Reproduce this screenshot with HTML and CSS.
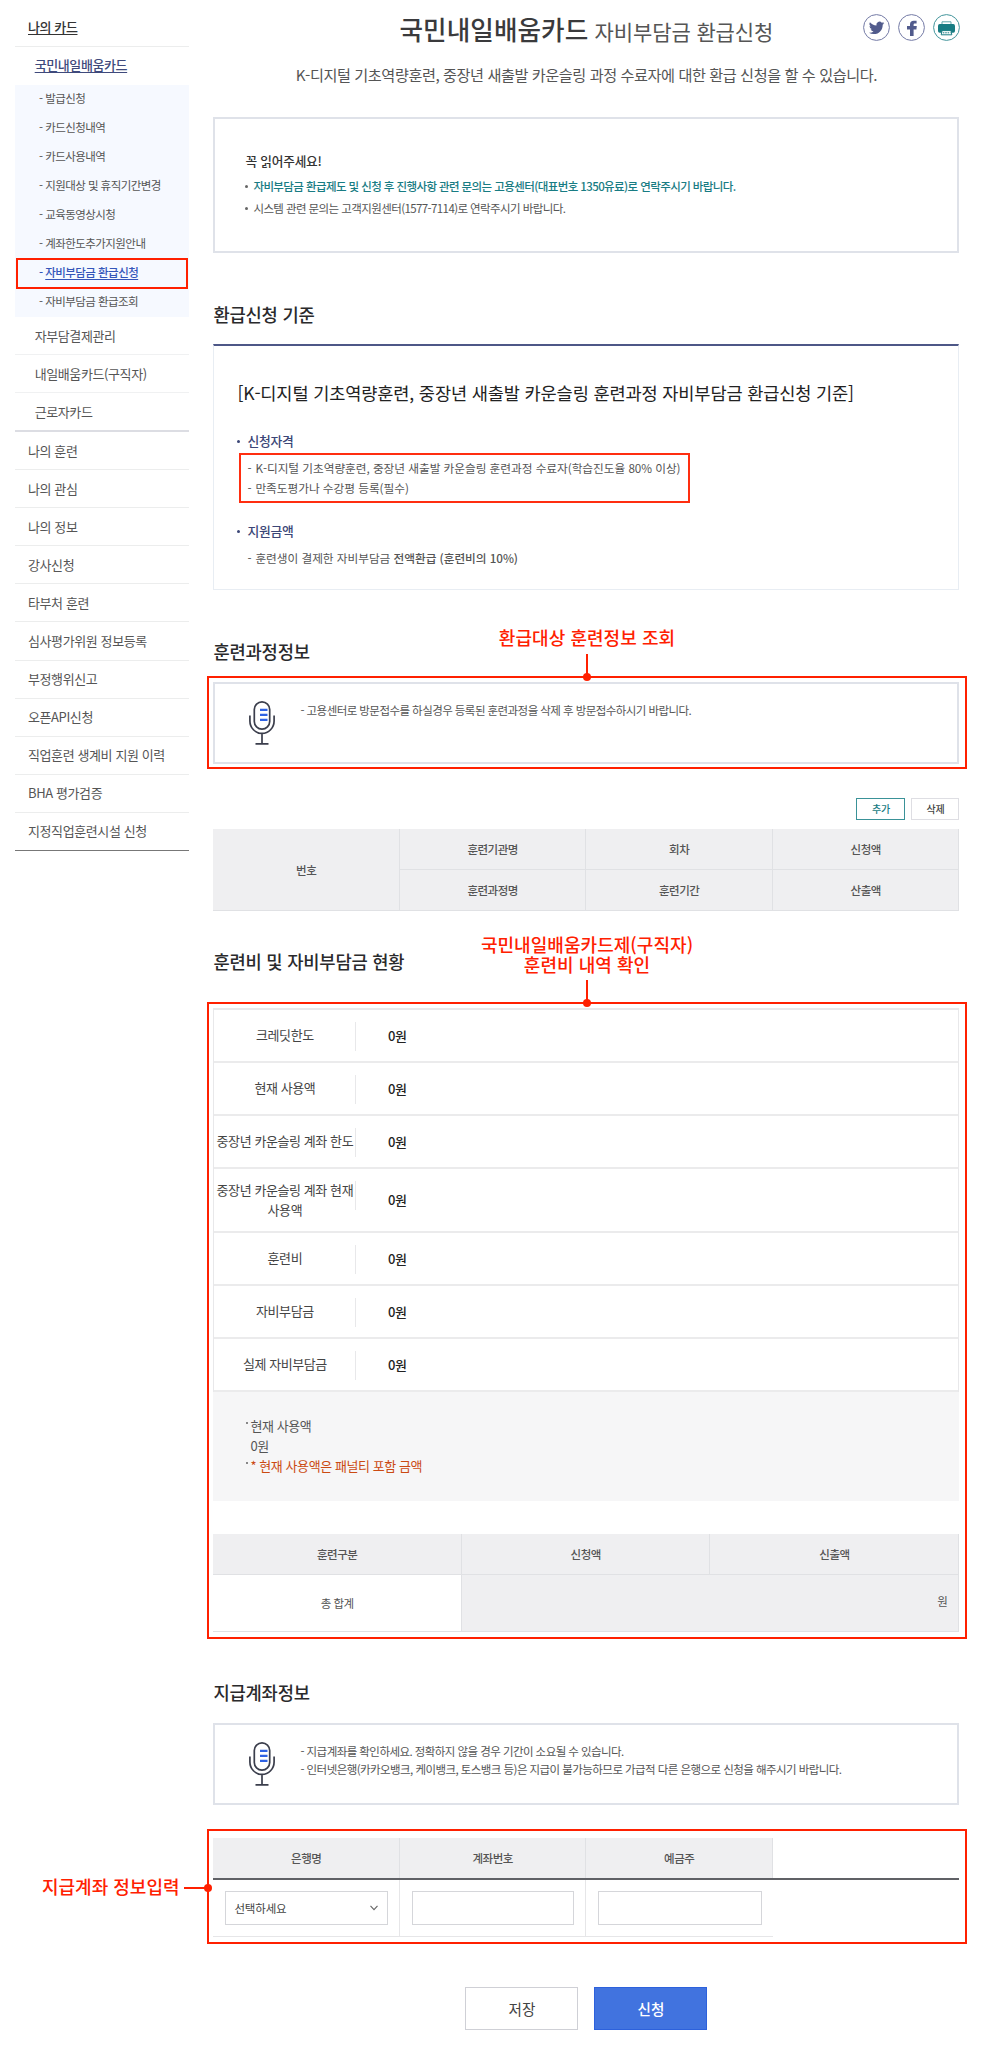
FILE: index.html
```html
<!DOCTYPE html>
<html lang="ko">
<head>
<meta charset="utf-8">
<title>국민내일배움카드 자비부담금 환급신청</title>
<link rel="stylesheet" href="styles.css">
</head>
<body>
<svg width="0" height="0" class="defs" aria-hidden="true">
  <symbol id="mic" viewBox="0 0 26 44">
    <g fill="none" stroke="#3b3e4c" stroke-width="1.7">
      <rect x="5.3" y="0.9" width="15.4" height="27.2" rx="7.7"/>
      <path d="M0.9 14.5V20a12.1 12.4 0 0 0 24.2 0V14.5M13 32.5V42.5M6.5 42.8H19.5"/>
    </g>
    <path d="M11 8.8H18.5M11 13.8H18.5M11 18.8H18.5" stroke="#2f62e3" stroke-width="2.2"/>
  </symbol>
</svg>
<div class="page">
  <nav class="side">
    <a class="top open">나의 카드</a>
    <a class="second current">국민내일배움카드</a>
    <ul class="sub">
      <li>- <span>발급신청</span></li>
      <li>- <span>카드신청내역</span></li>
      <li>- <span>카드사용내역</span></li>
      <li>- <span>지원대상 및 휴직기간변경</span></li>
      <li>- <span>교육동영상시청</span></li>
      <li>- <span>계좌한도추가지원안내</span></li>
      <li class="on">- <span>자비부담금 환급신청</span></li>
      <li>- <span>자비부담금 환급조회</span></li>
    </ul>
    <a class="second">자부담결제관리</a>
    <a class="second">내일배움카드(구직자)</a>
    <a class="second end">근로자카드</a>
    <a class="top">나의 훈련</a>
    <a class="top">나의 관심</a>
    <a class="top">나의 정보</a>
    <a class="top">강사신청</a>
    <a class="top">타부처 훈련</a>
    <a class="top">심사평가위원 정보등록</a>
    <a class="top">부정행위신고</a>
    <a class="top">오픈API신청</a>
    <a class="top">직업훈련 생계비 지원 이력</a>
    <a class="top">BHA 평가검증</a>
    <a class="top last">지정직업훈련시설 신청</a>
  </nav>

  <main class="main">
    <header class="head">
      <h1>국민내일배움카드 <small>자비부담금 환급신청</small></h1>
      <div class="share">
        <svg viewBox="0 0 27 27"><circle cx="13.5" cy="13.5" r="12.9" fill="#fff" stroke="#737aa5"/><path transform="translate(5.9 6.2) scale(.64)" fill="#515b8c" d="M23.95 4.57a10 10 0 0 1-2.82.77 4.96 4.96 0 0 0 2.16-2.72c-.95.55-2 .95-3.13 1.18a4.92 4.92 0 0 0-8.38 4.48C7.69 8.1 4.07 6.13 1.64 3.16a4.93 4.93 0 0 0 1.52 6.57 4.9 4.9 0 0 1-2.23-.61v.06a4.92 4.92 0 0 0 3.95 4.83 5 5 0 0 1-2.21.08 4.94 4.94 0 0 0 4.6 3.42A9.87 9.87 0 0 1 0 19.54a13.99 13.99 0 0 0 7.55 2.21c9.05 0 14-7.5 14-13.98 0-.21 0-.42-.02-.63a9.94 9.94 0 0 0 2.42-2.57z"/></svg>
        <svg viewBox="0 0 27 27"><circle cx="13.5" cy="13.5" r="12.9" fill="#fff" stroke="#737aa5"/><path fill="#515b8c" d="M12 22V15.4H9V12H12V10.4C12 8 13.4 6.8 15.7 6.8H18.6V9.6H17C16 9.6 15.6 10 15.6 11V12H18.8L18.4 15.4H15.6V22Z"/></svg>
        <svg viewBox="0 0 27 27"><circle cx="13.5" cy="13.5" r="12.9" fill="#fff" stroke="#42949b"/><path fill="none" stroke="#5fa5aa" d="M9 10V7.8H18V10"/><path fill="#187c83" d="M6.7 10H20.3Q22 10 22 12V17Q22 18.8 20.3 18.8H6.7Q5 18.8 5 17V12Q5 10 6.7 10Z"/><path fill="#fff" stroke="#187c83" d="M9 16.6H18L18.8 20.8H8.2Z"/><path stroke="#187c83" stroke-dasharray="1.6 .8" d="M9.8 18.8H17.5"/></svg>
      </div>
      <p class="lead">K-디지털 기초역량훈련, 중장년 새출발 카운슬링 과정 수료자에 대한 환급 신청을 할 수 있습니다.</p>
    </header>

    <section class="notice">
      <strong>꼭 읽어주세요!</strong>
      <ul>
        <li class="teal">자비부담금 환급제도 및 신청 후 진행사항 관련 문의는 고용센터(대표번호 1350유료)로 연락주시기 바랍니다.</li>
        <li>시스템 관련 문의는 고객지원센터(1577-7114)로 연락주시기 바랍니다.</li>
      </ul>
    </section>

    <h2 class="h-criteria">환급신청 기준</h2>
    <section class="criteria">
      <h3>[K-디지털 기초역량훈련, 중장년 새출발 카운슬링 훈련과정 자비부담금 환급신청 기준]</h3>
      <h4>신청자격</h4>
      <ul class="boxed">
        <li>K-디지털 기초역량훈련, 중장년 새출발 카운슬링 훈련과정 수료자(학습진도율 80% 이상)</li>
        <li>만족도평가나 수강평 등록(필수)</li>
      </ul>
      <h4>지원금액</h4>
      <ul class="plain">
        <li>훈련생이 결제한 자비부담금 <b>전액환급 (훈련비의 10%)</b></li>
      </ul>
    </section>

    <h2 class="h-course">훈련과정정보</h2>
    <section class="marked m-course">
      <div class="callout">환급대상 훈련정보 조회</div>
      <div class="tip">
        <svg class="mic"><use href="#mic"/></svg>
        <p>- 고용센터로 방문접수를 하실경우 등록된 훈련과정을 삭제 후 방문접수하시기 바랍니다.</p>
      </div>
    </section>
    <div class="tools"><button class="add">추가</button><button>삭제</button></div>
    <div class="grid course">
      <div class="tall">번호</div><div>훈련기관명</div><div>회차</div><div>신청액</div>
      <div>훈련과정명</div><div>훈련기간</div><div>산출액</div>
    </div>

    <h2 class="h-cost">훈련비 및 자비부담금 현황</h2>
    <section class="marked m-cost">
      <div class="callout">국민내일배움카드제(구직자)<br>훈련비 내역 확인</div>
      <dl class="status">
        <div><dt>크레딧한도</dt><dd>0원</dd></div>
        <div><dt>현재 사용액</dt><dd>0원</dd></div>
        <div><dt>중장년 카운슬링 계좌 한도</dt><dd>0원</dd></div>
        <div class="two"><dt>중장년 카운슬링 계좌 현재<br>사용액</dt><dd>0원</dd></div>
        <div><dt>훈련비</dt><dd>0원</dd></div>
        <div><dt>자비부담금</dt><dd>0원</dd></div>
        <div><dt>실제 자비부담금</dt><dd>0원</dd></div>
      </dl>
      <ul class="usage">
        <li>현재 사용액<br>0원</li>
        <li class="warn">* 현재 사용액은 패널티 포함 금액</li>
      </ul>
      <div class="grid total">
        <div>훈련구분</div><div>신청액</div><div>신출액</div>
        <div class="sum">총 합계</div><div class="won">원</div>
      </div>
    </section>

    <h2 class="h-account">지급계좌정보</h2>
    <div class="tip account-tip">
      <svg class="mic"><use href="#mic"/></svg>
      <p>- 지급계좌를 확인하세요. 정확하지 않을 경우 기간이 소요될 수 있습니다.<br>- 인터넷은행(카카오뱅크, 케이뱅크, 토스뱅크 등)은 지급이 불가능하므로 가급적 다른 은행으로 신청을 해주시기 바랍니다.</p>
    </div>
    <section class="marked m-account">
      <div class="callout left">지급계좌 정보입력</div>
      <div class="grid bank-head"><div>은행명</div><div>계좌번호</div><div>예금주</div></div>
      <div class="bank-row">
        <div><span class="field">선택하세요<svg viewBox="0 0 8 6"><path d="M.5 .8L4 4.6L7.5 .8" fill="none" stroke="#666" stroke-width="1.1"/></svg></span></div>
        <div><span class="field"></span></div>
        <div><span class="field"></span></div>
      </div>
    </section>
    <div class="actions"><button>저장</button><button class="primary">신청</button></div>
  </main>
</div>
</body>
</html>
```
FILE: styles.css
```css
* { box-sizing: border-box; margin: 0; padding: 0; }
body { width: 1000px; height: 2049px; overflow: hidden; background: #fff; color: #555; font-family: "Noto Sans CJK KR", "Noto Sans", sans-serif; font-size: 11.5px; letter-spacing: -.56px; white-space: nowrap; }
ul { list-style: none; }
.defs { position: absolute; }
.page { display: flex; gap: 24.4px; padding-left: 15px; }

.side { width: 174px; padding-top: 8px; font-size: 13px; letter-spacing: -.4px; }
.side a { display: flex; align-items: center; height: 38.1px; border-bottom: 1px solid #eceded; padding: 0 0 1px 13px; }
.side a.second { height: 38px; padding-left: 19.7px; border-color: #f0f1f2; }
.side a.open { height: 39px; color: #333; font-weight: 500; text-decoration: underline; text-underline-offset: 2px; }
.side a.current { border: 0; padding-bottom: 4px; color: #3f4a7c; font-weight: 500; text-decoration: underline; text-underline-offset: 2px; }
.side a.second.end { border-bottom: 2px solid #dcdde3; height: 39px; }
.side a.last { border-color: #777; }
.sub { background: #f6f9ff; font-size: 11.5px; letter-spacing: -.55px; height: 232px; }
.sub li { height: 29px; line-height: 27px; padding-left: 24px; }
.sub li.on { color: #3455b9; font-weight: 500; outline: 2px solid #ff2000; outline-offset: -1px; margin: 0 2px; padding-left: 22px; }
.sub li.on span { text-decoration: underline; text-underline-offset: 2px; }

.main { width: 746px; }
.head { position: relative; height: 117px; padding-top: 10px; text-align: center; }
h1 { font-size: 25.6px; line-height: 38px; font-weight: 500; letter-spacing: .05px; color: #3a3a3c; }
h1 small { font-size: 21px; font-weight: 400; letter-spacing: -.1px; color: #555; margin-left: -1px; }
.share { position: absolute; right: -1px; top: 14px; display: flex; gap: 8px; }
.share svg { width: 27px; height: 27px; }
.lead { font-size: 15.2px; letter-spacing: -.45px; line-height: 24px; margin-top: 12px; }

.notice { height: 136px; border: 2px solid #dfe2e9; padding: 32px 0 0 30px; }
.notice strong { display: block; font-size: 12.7px; letter-spacing: -.2px; line-height: 20px; font-weight: 500; color: #333; }
.notice ul { margin-top: 5px; letter-spacing: -.59px; }
.notice li { line-height: 21.5px; padding-left: 8px; position: relative; }
.notice li::before, h4::before { content: ""; position: absolute; left: 0; top: 9px; width: 3px; height: 3px; border-radius: 50%; background: #666; }
.notice .teal { color: #187c83; font-weight: 500; }

h2 { position: relative; top: -1px; font-size: 17.7px; line-height: 26px; font-weight: 500; letter-spacing: -.2px; color: #2a2a2c; }
.h-criteria { margin-top: 49px; }
.criteria { margin-top: 16px; height: 246px; border: 1px solid #e8edf3; border-top: 2px solid #4d5787; padding: 33px 0 0 23px; }
h3 { font-size: 17.6px; line-height: 27px; font-weight: 400; letter-spacing: -.16px; color: #222; }
h4 { position: relative; font-size: 12.8px; line-height: 20px; font-weight: 500; letter-spacing: -.2px; color: #3b4677; padding-left: 10px; margin-top: 25px; }
h4::before { background: #3b4677; }
.criteria li { font-size: 11.7px; line-height: 20.3px; letter-spacing: -.05px; }
.criteria li::before { content: "-"; margin-right: 4px; }
.criteria b { font-weight: 500; color: #555; }
.boxed { width: 451px; height: 50px; margin: 2px 0 0 2px; border: 2px solid #ff2e10; padding: 3px 0 0 6px; }
.boxed + h4 { margin-top: 18px; }
.plain { margin: 7px 0 0 10px; }

.h-course { margin-top: 49px; }
.marked { position: relative; width: 760px; margin-left: -6.4px; border: 2px solid #ff2000; padding-left: 4.4px; }
.callout { position: absolute; left: 0; right: 0; bottom: 100%; padding-bottom: 31px; text-align: center; color: #ff2000; font-size: 18px; line-height: 20px; letter-spacing: .05px; font-weight: 500; }
.callout::before { content: ""; position: absolute; left: 377px; bottom: 0; width: 2px; height: 24px; background: #ff2000; }
.callout::after { content: ""; position: absolute; left: 374px; bottom: -3px; width: 8px; height: 8px; border-radius: 50%; background: #ff2000; }
.callout.left { left: -174px; right: auto; top: 45px; bottom: auto; width: 178px; height: 22px; padding: 0 0 0 7px; text-align: left; line-height: 20px; letter-spacing: 0; }
.callout.left::before { left: 149px; top: 11px; width: 23px; height: 2px; }
.callout.left::after { left: 169px; top: 8px; }
.m-course { height: 93px; margin-top: 11px; padding-top: 4px; }
.tip { width: 746px; height: 82px; border: 2px solid #dfe2e9; display: flex; padding: 16.5px 0 0 33.6px; }
.mic { width: 26px; height: 44px; flex: none; }
.tip p { margin-left: 25.5px; line-height: 18.3px; }

.tools { display: flex; justify-content: flex-end; gap: 6px; margin-top: 29px; }
button { font: 500 10px/20px "Noto Sans CJK KR", sans-serif; letter-spacing: -.3px; width: 48px; height: 22px; background: #fff; border: 1px solid #dedee3; color: #444; }
button.add { border-color: #3a9298; color: #187c83; width: 49px; }
.grid { display: grid; text-align: center; font-weight: 500; color: #555; }
.grid div { background: #efeff1; border-right: 1px solid #e0e1e4; border-bottom: 1px solid #e0e1e4; display: flex; align-items: center; justify-content: center; }
.course { grid-template: 41px 41px / repeat(4, 1fr); margin-top: 9px; }
.course .tall { grid-row: span 2; }
.h-cost { margin-top: 38px; }
.m-cost { margin-top: 27px; height: 637px; padding-top: 4px; }
.m-cost .callout { line-height: 20px; padding-bottom: 30px; }
.status { width: 746px; border: 1px solid #e8e8ea; border-top-width: 2px; border-bottom: 0; font-size: 13px; letter-spacing: -.42px; color: #444; }
.status > div { display: flex; height: 53px; border-bottom: 2px solid #ebebec; padding-bottom: 1px; align-items: center; background: linear-gradient(#e8e8ea, #e8e8ea) 141px 12px / 1px 29px no-repeat; }
.status .two { height: 64px; }
.status dt { width: 141px; line-height: 20px; text-align: center; }
.status dd { margin-left: 32.5px; font-weight: 500; color: #222; }
.usage { width: 746px; height: 109px; background: #f6f6f7; padding: 24px 0 0 37px; font-size: 13px; letter-spacing: -.42px; line-height: 19.9px; }
.usage li { position: relative; }
.usage li::before { content: ""; position: absolute; left: -4px; top: 6px; width: 2px; height: 2px; background: #888; }
.usage .warn { color: #cb4a12; }
.total { width: 746px; margin-top: 33px; grid-template: 41px 57px / 248.5px 248.5px 249px; }
.total .sum { background: #fff; font-weight: 400; }
.total .won { grid-column: span 2; justify-content: flex-end; padding: 0 11px 4px 0; font-weight: 400; }

.h-account { margin-top: 41px; }
.account-tip { margin-top: 17px; }
.m-account { margin-top: 24px; height: 115px; padding-top: 7px; }
.bank-head { width: 746px; grid-template: 40px / 186.5px 186.5px 186.5px; border-bottom: 2px solid #606166; }
.bank-head div { border-bottom: 0; }
.bank-row { display: grid; grid-template-columns: 186.5px 186.5px 186.5px; width: 559.5px; height: 57px; border-bottom: 1px solid #e6e6e8; }
.bank-row div { border-right: 1px solid #e6e6e8; padding: 11px 11px 0 12px; }
.bank-row div:last-child { border: 0; }
.field { display: flex; align-items: center; justify-content: space-between; height: 34px; border: 1px solid #d5d6da; padding: 0 9px 0 8px; letter-spacing: -.15px; color: #444; }
.field svg { width: 8px; height: 6px; }
.actions { display: flex; justify-content: center; gap: 16px; margin-top: 43px; }
.actions button { width: 113px; height: 43px; font-size: 14.6px; font-weight: 400; line-height: 40px; letter-spacing: 0; border-color: #cfd0d6; }
.actions .primary { background: #4173df; border-color: #2d61dc; color: #fff; font-weight: 500; }
```
